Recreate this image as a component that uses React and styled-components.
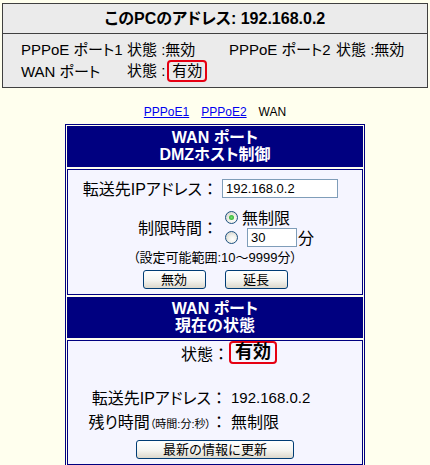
import React from "react";
import styled, { createGlobalStyle } from "styled-components";

const GlobalStyle = createGlobalStyle`
  body {
    margin: 0;
    background: #ffffee;
    color: #000;
    font-family: "Liberation Sans", "Noto Sans CJK JP", sans-serif;
    font-feature-settings: "palt";
  }
`;

const StatusBox = styled.section`
  margin: 3px 2px 0;
  border: 1px solid #404040;
  background: #ebebeb;
`;

const BoxTitle = styled.h1`
  margin: 0;
  height: 29px;
  line-height: 29px;
  text-align: center;
  font-size: 16px;
  font-weight: bold;
  border-bottom: 1px solid #404040;
`;

const PortGrid = styled.div`
  display: grid;
  grid-template-columns: 106px 102px 107px auto;
  grid-auto-rows: 22px;
  align-items: center;
  padding: 3px 0 6px 18px;
  font-size: 15px;
  white-space: nowrap;
`;

const Mark = styled.span`
  display: inline-block;
  border: 2px solid #e60012;
  border-radius: 4px;
  padding: 0 ${(p) => (p.$big ? 4 : 3)}px;
  line-height: ${(p) => (p.$big ? 19 : 18)}px;
  font-size: ${(p) => (p.$big ? 18 : 15)}px;
  font-weight: ${(p) => (p.$big ? "bold" : "normal")};
  margin-left: ${(p) => (p.$big ? 0 : 2)}px;
`;

const Colon = styled.span`
  font-feature-settings: normal;
`;

const Tabs = styled.nav`
  padding-top: 16px;
  line-height: 16px;
  text-align: center;
  font-size: 12px;
`;

const Tab = styled.a`
  margin: 0 6px;
  color: ${(p) => (p.$current ? "#000" : "#0000ee")};
  text-decoration: ${(p) => (p.$current ? "none" : "underline")};
`;

const Panel = styled.div`
  width: 300px;
  box-sizing: border-box;
  margin: 4px auto 0;
  border: 1px solid #000080;
  padding: 1px;
  display: flex;
  flex-direction: column;
  gap: 2px;
`;

const HeadCell = styled.div`
  border: 1px solid #000080;
  background: #000080;
  color: #fff;
  font-size: 16px;
  font-weight: bold;
  line-height: 17px;
  padding: 2px 0 3px;
  text-align: center;
`;

const BodyCell = styled.div`
  border: 1px solid #000080;
  background: #f5f5ff;
  font-size: 16px;
  padding: ${(p) => p.$pad};
  display: flex;
  flex-direction: column;
`;

const FormGrid = styled.div`
  display: grid;
  grid-template-columns: ${(p) => p.$label}px auto;
  column-gap: 4px;
  row-gap: ${(p) => p.$gap}px;
  align-items: center;
  margin-top: ${(p) => p.$top || 0}px;
  white-space: nowrap;
`;

const Label = styled.span`
  text-align: right;
`;

const Small = styled.small`
  font-size: 11px;
`;

const TextField = styled.input`
  box-sizing: border-box;
  width: ${(p) => p.$w}px;
  height: 19px;
  margin: 0;
  border: 1px solid #7f9db9;
  background: #fff;
  padding: 0 3px;
  font-family: "Liberation Sans", sans-serif;
  font-size: 13px;
  color: #000;
`;

const Options = styled.div`
  display: flex;
  flex-direction: column;
`;

const Option = styled.label`
  display: flex;
  align-items: center;
  height: 20px;
  gap: ${(p) => p.$gap}px;
`;

const Radio = styled.span`
  box-sizing: border-box;
  flex: none;
  width: 13px;
  height: 13px;
  margin-left: 3px;
  border-radius: 50%;
  border: 1px solid #1c5180;
  background: radial-gradient(circle at 60% 65%, #fff 0, #f0f0ea 40%, #c8c8c0 100%);
  display: flex;
  align-items: center;
  justify-content: center;
  &::after {
    content: "";
    width: 5px;
    height: 5px;
    border-radius: 50%;
    background: ${(p) => (p.$on ? "radial-gradient(#6ee06e, #21a121)" : "transparent")};
  }
`;

const Note = styled.p`
  margin: 3px 0 0;
  text-align: center;
  font-size: 13px;
  line-height: 16px;
`;

const ButtonRow = styled.div`
  display: flex;
  justify-content: center;
  gap: 19px;
  margin-top: ${(p) => p.$top}px;
`;

const Button = styled.button`
  box-sizing: border-box;
  width: ${(p) => p.$w}px;
  height: 19px;
  padding: 0;
  border: 1px solid #003c74;
  border-radius: 3px;
  background: linear-gradient(#ffffff, #f4f4f0 55%, #dcd8cc);
  font-family: "Liberation Sans", "Noto Sans CJK JP", sans-serif;
  font-size: 13px;
  line-height: 17px;
  color: #000;
`;

const StateRow = styled.div`
  display: flex;
  align-items: center;
  height: 23px;
  padding-left: 113px;
`;

const Value = styled.span`
  font-size: ${(p) => p.$size || 16}px;
`;

export default function App() {
  return (
    <>
      <GlobalStyle />
      <StatusBox>
        <BoxTitle>このPCのアドレス: 192.168.0.2</BoxTitle>
        <PortGrid>
          <span>PPPoE ポート1</span>
          <span>状態 :無効</span>
          <span>PPPoE ポート2</span>
          <span>状態 :無効</span>
          <span>WAN ポート</span>
          <span>
            状態 :<Mark>有効</Mark>
          </span>
        </PortGrid>
      </StatusBox>

      <Tabs>
        <Tab href="#">PPPoE1</Tab>
        <Tab href="#">PPPoE2</Tab>
        <Tab as="span" $current>
          WAN
        </Tab>
      </Tabs>

      <Panel>
        <HeadCell>
          WAN ポート
          <br />
          DMZホスト制御
        </HeadCell>
        <BodyCell $pad="6px 0 5px">
          <FormGrid $label={150} $gap={7}>
            <Label>
              転送先IPアドレス<Colon>：</Colon>
            </Label>
            <TextField $w={116} defaultValue="192.168.0.2" />
            <Label>
              制限時間<Colon>：</Colon>
            </Label>
            <Options>
              <Option $gap={4}>
                <Radio $on />
                無制限
              </Option>
              <Option $gap={9}>
                <Radio />
                <TextField $w={50} defaultValue="30" />
                <span style={{ marginLeft: -8 }}>分</span>
              </Option>
            </Options>
          </FormGrid>
          <Note>（設定可能範囲:10〜9999分）</Note>
          <ButtonRow $top={4}>
            <Button $w={63}>無効</Button>
            <Button $w={63}>延長</Button>
          </ButtonRow>
        </BodyCell>
        <HeadCell>
          WAN ポート
          <br />
          現在の状態
        </HeadCell>
        <BodyCell $pad="0 0 5px">
          <StateRow>
            状態<Colon>：</Colon>
            <Mark $big>有効</Mark>
          </StateRow>
          <FormGrid $label={159} $gap={0} $top={21}>
            <Label>
              転送先IPアドレス<Colon>：</Colon>
            </Label>
            <Value $size={15}>192.168.0.2</Value>
            <Label>
              残り時間<Small>（時間:分:秒）</Small>
              <Colon>：</Colon>
            </Label>
            <Value>無制限</Value>
          </FormGrid>
          <ButtonRow $top={7}>
            <Button $w={158}>最新の情報に更新</Button>
          </ButtonRow>
        </BodyCell>
      </Panel>
    </>
  );
}
